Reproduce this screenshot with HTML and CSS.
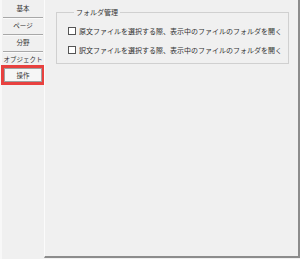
FILE: index.html
```html
<!DOCTYPE html>
<html lang="ja">

<head>
  <meta charset="UTF-8">
  <title>設定</title>
  <link rel="stylesheet" href="styles.css">
</head>

<body>
  <div class="window">
    <div class="sidebar">
      <div class="tab">基本</div>
      <div class="tab">ページ</div>
      <div class="tab">分野</div>
      <div class="tab plain">オブジェクト</div>
      <div class="tab active">操作</div>
    </div>

    <div class="panel">
      <fieldset class="group">
        <legend>フォルダ管理</legend>
        <label class="check"><span class="box"></span>原文ファイルを選択する際、表示中のファイルのフォルダを開く</label>
        <label class="check"><span class="box"></span>訳文ファイルを選択する際、表示中のファイルのフォルダを開く</label>
      </fieldset>
    </div>
  </div>
</body>

</html>
```

FILE: styles.css
```css
* {
  box-sizing: border-box;
  margin: 0;
  padding: 0;
  font-family: "Noto Sans CJK JP", "Noto Sans", sans-serif;
}

body {
  background-color: #f0f0f0;
  color: #333;
}

.window {
  display: flex;
  height: 259px;
}

.sidebar {
  flex-shrink: 0;
  width: 44px;
  padding: 1px 1px 0 1px;
  border-left: 2px solid #f8f8f8;
}

.tab {
  height: 17px;
  line-height: 15px;
  font-size: 6.5px;
  text-align: center;
  border-bottom: 1px solid #a8a8a8;
  box-shadow: 0 1px 0 #fafafa;
}

.tab.plain {
  height: 16px;
  border-bottom: none;
  box-shadow: none;
}

.tab.active {
  margin: 0 1px;
  height: 14px;
  line-height: 12px;
  border: 1px solid #a0a0a0;
  background-color: #f6f6f6;
  box-shadow: none;
  outline: 3px solid #e8413f;
}

.panel {
  flex-grow: 1;
  height: 258px;
  padding: 7px 9px 0 11px;
  border-left: 1px solid #fbfbfb;
  border-right: 2px solid #8c8c8c;
  border-bottom: 2px solid #8c8c8c;
}

.group {
  height: 57px;
  border: 1px solid #d0d0d0;
  padding: 4px 0 0 11px;
}

.group legend {
  margin-left: 6px;
  padding: 0 2px;
  font-size: 7px;
  line-height: 10px;
}

.check {
  display: flex;
  align-items: center;
  gap: 3px;
  height: 19px;
  font-size: 7px;
  white-space: nowrap;
}

.box {
  width: 8px;
  height: 8px;
  border: 1px solid #555;
  background-color: #fff;
}
```
